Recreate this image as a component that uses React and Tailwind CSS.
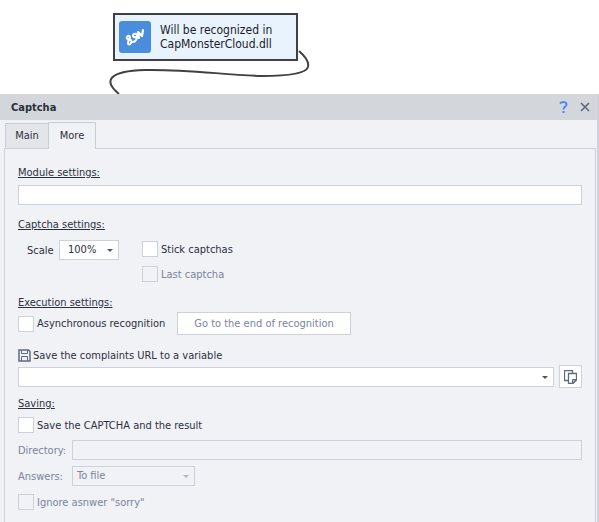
import React from "react";

function Heading({ children, className = "" }) {
  return <h2 className={`h-4 leading-[18px] underline underline-offset-1 ${className}`}>{children}</h2>;
}

function Check({ label, disabled = false, className = "" }) {
  return (
    <label className={`flex h-4 items-center gap-[3px] whitespace-nowrap ${disabled ? "text-[#7b839d]" : ""} ${className}`}>
      <input
        type="checkbox"
        disabled={disabled}
        className="size-4 shrink-0 appearance-none border border-[#cdd1da] bg-white disabled:bg-[#f1f2f6]"
      />
      <span className="pt-0.5">{label}</span>
    </label>
  );
}

function Dropdown({ id, options, disabled = false, className = "" }) {
  return (
    <div className={`relative h-5 ${className}`}>
      <select
        id={id}
        disabled={disabled}
        className="block h-5 w-full appearance-none border border-[#cdd1da] bg-white pt-px opacity-100 disabled:bg-[#f1f2f6] disabled:text-[#7b839d]"
      >
        {options.map((o) => (
          <option key={o}>{o}</option>
        ))}
      </select>
      <svg
        viewBox="0 0 6 3"
        className={`pointer-events-none absolute top-[9px] right-1.5 h-[3px] w-1.5 ${disabled ? "fill-[#b4b7be]" : "fill-[#50545c]"}`}
      >
        <path d="M0 0h6L3 3z" />
      </svg>
    </div>
  );
}

function ActionNode() {
  return (
    <div className="relative h-[94px]">
      <svg className="absolute top-0 left-0 h-[94px] w-[330px]" fill="none" stroke="#404042" strokeWidth="2">
        <path d="M299 51C306 57 309 63 308 67C306 73 290 76 262 76C225 75 185 69 145 70C108 71 103 81 119 94" />
      </svg>
      <div className="absolute top-[13px] left-[113px] flex h-12 w-[185px] items-center gap-[9px] border-2 border-[#404042] bg-[#e9f3fe] pl-1">
        <svg viewBox="0 0 32 32" className="size-8 shrink-0">
          <rect width="32" height="32" rx="3" fill="#4a8ddc" />
          <g fill="none" stroke="#fff" strokeWidth="2" strokeLinejoin="round" strokeLinecap="round">
            <path d="M20 17l-1-6 4 4 1-6" strokeWidth="2.2" />
            <path d="M17 16c-3 1-4-2-2-3s4 1 3 4-2 4-4 4" />
            <path d="M8 16c1-2 3-1 3 0s-1 2-2 2-2-1-1-2zM10 19c2-1 3 1 2 3s-3 2-3 0 0-2 1-3z" />
          </g>
        </svg>
        <p className="text-[12px] leading-[14px] whitespace-nowrap text-[#1c1c28]">
          Will be recognized in
          <br />
          CapMonsterCloud.dll
        </p>
      </div>
    </div>
  );
}

export default function App() {
  return (
    <main className="flex min-h-screen flex-col bg-white font-['DejaVu_Sans_Condensed','DejaVu_Sans',sans-serif] text-[11px] text-[#2b3040]">
      <ActionNode />
      <section className="flex grow flex-col border-r-2 border-[#d0d1da] bg-[#f1f2f6]">
        <header className="flex h-[26px] items-center bg-[#d3d6da] pr-[7px] pl-[11px]">
          <h1 className="grow pt-0.5 font-bold">Captcha</h1>
          <button aria-label="Help" className="mr-3">
            <svg viewBox="0 0 9 12" className="h-3 w-[9px]" fill="none" stroke="#4f86f7" strokeWidth="2">
              <path d="M1 2.5C3 .5 7.500 .5 7.500 3.500 7.500 5.500 4.500 5.500 4.500 8.500M4.500 10v2" />
            </svg>
          </button>
          <button aria-label="Close">
            <svg viewBox="0 0 10 10" className="size-2.5" stroke="#5c667c" strokeWidth="1.6">
              <path d="M1 1l8 8M9 1l-8 8" />
            </svg>
          </button>
        </header>

        <div role="tablist" className="z-10 -mb-px flex items-end pt-0.5 pl-[5px]">
          <button role="tab" aria-selected="false" className="mb-px h-[25px] w-[43px] border border-r-0 border-b-0 border-[#c9ced6] bg-[#e4e5e9] pt-px">
            Main
          </button>
          <button role="tab" aria-selected="true" className="h-[27px] w-12 border border-b-0 border-[#c9ced6] bg-[#f1f2f6] pt-px">
            More
          </button>
        </div>

        <form className="mr-px ml-1 flex grow flex-col border border-b-0 border-[#cdd1da] px-[13px] pt-[15px]">
          <Heading>Module settings:</Heading>
          <input aria-label="Module settings" className="mt-[5px] h-5 w-full border border-[#cdd1da] bg-white px-1" />

          <Heading className="mt-[11px]">Captcha settings:</Heading>
          <div className="mt-2 flex items-start pl-[9px]">
            <label htmlFor="scale" className="w-8 pt-px leading-5">Scale</label>
            <Dropdown id="scale" options={["100%"]} className="w-[60px] [&>select]:pl-2" />
            <div className="mt-px ml-[23px] flex flex-col gap-[9px]">
              <Check label="Stick captchas" />
              <Check label="Last captcha" disabled />
            </div>
          </div>

          <Heading className="mt-3">Execution settings:</Heading>
          <div className="mt-0.5 flex items-center">
            <Check label="Asynchronous recognition" className="w-[159px]" />
            <button type="button" className="h-[23px] w-[174px] border border-[#cdd1da] bg-white pt-0.5 whitespace-nowrap text-[#7b839d]">
              Go to the end of recognition
            </button>
          </div>

          <label htmlFor="url" className="mt-3 flex h-4 items-center gap-0.5">
            <svg viewBox="0 0 13 13" className="size-[13px]" fill="none" stroke="#5f6a80">
              <path d="M1 1h9.500l1.500 1.500V12H1z" strokeWidth="1.500" />
              <path d="M3.500 1v3.500h6V1M3.500 12V7.500h6V12" />
            </svg>
            <span className="pt-0.5">Save the complaints URL to a variable</span>
          </label>
          <div className="mt-0.5 flex items-center gap-[5px]">
            <Dropdown id="url" options={[""]} className="grow" />
            <button type="button" aria-label="Choose variable" className="grid h-[23px] w-[23px] place-items-center border border-[#cdd1da] bg-white">
              <svg viewBox="0 0 13 14" className="h-3.5 w-[13px]" fill="none" stroke="#5f6a80">
                <path d="M4 10.500H.5V.5h8V3" strokeWidth="1.300" />
                <path d="M4.500 3.500h8v6.500l-3.500 3.500H4.500z" strokeWidth="1.300" />
                <path d="M12.500 9.500h-4v4z" fill="#a9b0bf" />
              </svg>
            </button>
          </div>

          <Heading className="mt-[7px]">Saving:</Heading>
          <Check label="Save the CAPTCHA and the result" className="mt-1.5" />
          <div className="mt-[7px] flex items-center text-[#7b839d]">
            <label htmlFor="dir" className="w-[54px] shrink-0 pt-0.5">Directory:</label>
            <input id="dir" disabled className="h-5 min-w-0 grow border border-[#cdd1da] bg-[#f1f2f6] px-1" />
          </div>
          <div className="mt-1.5 flex items-center text-[#7b839d]">
            <label htmlFor="answers" className="w-[54px] shrink-0 pt-0.5">Answers:</label>
            <Dropdown id="answers" options={["To file"]} disabled className="w-[123px] [&>select]:pl-1" />
          </div>
          <Check label={'Ignore asnwer "sorry"'} disabled className="mt-2" />
        </form>
      </section>
    </main>
  );
}
